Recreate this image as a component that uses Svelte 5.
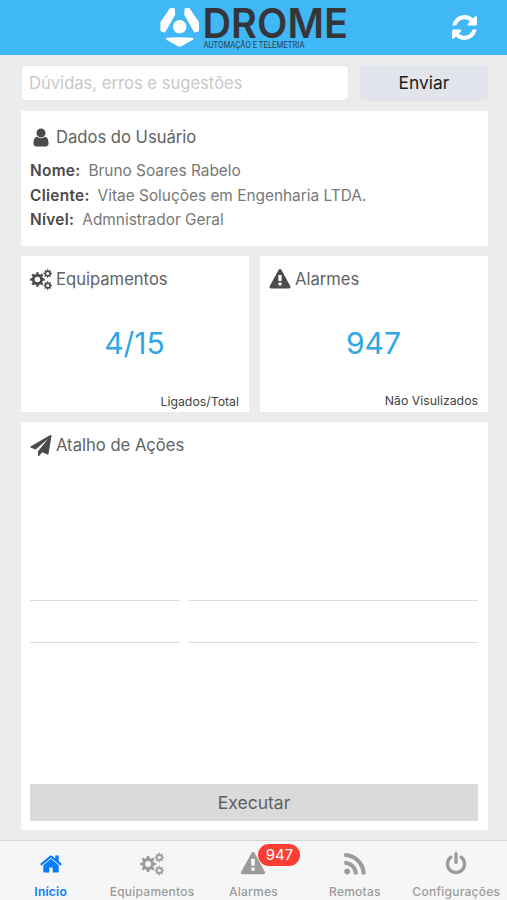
<script lang="ts">
	const icons: Record<string, string> = {
		home: 'M1408 992v480q0 26-19 45t-45 19h-384v-384h-256v384h-384q-26 0-45-19t-19-45v-480q0-1 .5-3t.5-3l575-474 575 474q1 2 1 6zm223-69l-62 74q-8 9-21 11h-3q-13 0-21-7l-692-577-692 577q-12 8-24 7-13-2-21-11l-62-74q-8-10-7-23.5t11-21.5l719-599q32-26 76-26t76 26l244 204v-195q0-14 9-23t23-9h192q14 0 23 9t9 23v408l219 182q10 8 11 21.5t-7 23.5z',
		warning: 'M1024 1375v-190q0-14-9.5-23.5t-22.5-9.5h-192q-13 0-22.5 9.5t-9.5 23.5v190q0 14 9.5 23.5t22.5 9.5h192q13 0 22.5-9.5t9.5-23.5zm-2-374l18-459q0-12-10-19-13-11-24-11h-220q-11 0-24 11-10 7-10 21l17 457q0 10 10 16.5t24 6.5h185q14 0 23.5-6.5t10.5-16.5zm-14-934l768 1408q35 63-2 126-17 29-46.5 46t-63.5 17h-1536q-34 0-63.5-17t-46.5-46q-37-63-2-126l768-1408q17-31 47-49t65-18 65 18 47 49z',
		refresh: 'M1639 1056q0 5-1 7-64 268-268 434.5t-478 166.5q-146 0-282.5-55t-243.5-157l-129 129q-19 19-45 19t-45-19-19-45v-448q0-26 19-45t45-19h448q26 0 45 19t19 45-19 45l-137 137q71 66 161 102t187 36q134 0 250-65t186-179q11-17 53-117 8-23 30-23h192q13 0 22.5 9.5t9.5 22.5zm25-800v448q0 26-19 45t-45 19h-448q-26 0-45-19t-19-45 19-45l138-138q-148-137-349-137-134 0-250 65t-186 179q-11 17-53 117-8 23-30 23h-199q-13 0-22.5-9.5t-9.5-22.5v-7q65-268 270-434.5t480-166.5q146 0 284 55.5t245 156.5l130-129q19-19 45-19t45 19 19 45z',
		rss: 'M576 1344q0 80-56 136t-136 56-136-56-56-136 56-136 136-56 136 56 56 136zm512 123q2 28-17 48-18 21-47 21h-135q-25 0-43-16.5t-20-41.5q-22-229-184.5-391.5t-391.5-184.5q-25-2-41.5-20t-16.5-43v-135q0-29 21-47 17-17 43-17h5q160 13 306 80.5t259 181.5q114 113 181.5 259t80.5 306zm512 2q2 27-18 47-18 20-46 20h-143q-26 0-44.5-17.5t-19.5-42.5q-12-215-101-408.5t-231.5-336-336-231.5-408.5-102q-25-1-42.5-19.5t-17.5-43.5v-143q0-28 20-46 18-18 44-18h3q262 13 501.5 120t425.5 294q187 186 294 425.5t120 501.5z',
		power: 'M1664 896q0 156-61 298t-164 245-245 164-298 61-298-61-245-164-164-245-61-298q0-182 80.5-343t226.5-270q43-32 95.5-25t83.5 50q32 42 24.5 94.5t-49.5 84.5q-98 74-151.5 181t-53.5 228q0 104 40.5 198.5t109.5 163.5 163.5 109.5 198.5 40.5 198.5-40.5 163.5-109.5 109.5-163.5 40.5-198.5q0-121-53.5-228t-151.5-181q-42-32-49.5-84.5t24.5-94.5q31-43 84-50t95 25q146 109 226.5 270t80.5 343zm-640-768v640q0 52-38 90t-90 38-90-38-38-90v-640q0-52 38-90t90-38 90 38 38 90z',
		plane: 'M1764 11q33 24 27 64l-256 1536q-5 29-32 45-14 8-31 8-11 0-24-5l-453-185-242 295q-18 23-49 23-13 0-22-4-19-7-30.5-23.5t-11.5-36.5v-349l864-1059-1069 925-395-162q-37-14-40-55-2-40 32-59l1664-960q15-9 32-9 20 0 36 11z',
		user: 'M1536 1399q0 109-62.5 187t-150.5 78h-854q-88 0-150.5-78t-62.5-187q0-85 8.5-160.5t31.5-152 58.5-131 94-89 134.5-34.5q131 128 313 128t313-128q76 0 134.5 34.5t94 89 58.5 131 31.5 152 8.5 160.5zm-256-887q0 159-112.5 271.5t-271.5 112.5-271.5-112.5-112.5-271.5 112.5-271.5 271.5-112.5 271.5 112.5 112.5 271.5z',
		cogs: gear(640, 896, 640, 480, 240) + gear(1530, 380, 370, 270, 135) + gear(1530, 1412, 370, 270, 135)
	};

	const boxes: Record<string, string> = {
		home: '0 0 1664 1792',
		cogs: '0 0 1900 1792',
		rss: '110 70 1572 1572'
	};

	// Eight-toothed gear with a round hole
	function gear(cx: number, cy: number, outer: number, inner: number, hole: number): string {
		const points: string[] = [];
		for (let i = 0; i < 8; i++) {
			const steps = [[-0.29, inner], [-0.2, outer], [0.2, outer], [0.29, inner]];
			for (const [offset, r] of steps) {
				const a = ((i + offset) * Math.PI) / 4;
				points.push(`${(cx + r * Math.cos(a)).toFixed(0)} ${(cy + r * Math.sin(a)).toFixed(0)}`);
			}
		}
		return `M${points.join('L')}zM${cx - hole} ${cy}a${hole} ${hole} 0 1 0 ${hole * 2} 0a${hole} ${hole} 0 1 0 ${-hole * 2} 0z`;
	}

	const userInfo = [
		{ label: 'Nome:', value: 'Bruno Soares Rabelo' },
		{ label: 'Cliente:', value: 'Vitae Soluções em Engenharia LTDA.' },
		{ label: 'Nível:', value: 'Admnistrador Geral' }
	];

	const tabs = [
		{ label: 'Início', icon: 'home', badge: 0 },
		{ label: 'Equipamentos', icon: 'cogs', badge: 0 },
		{ label: 'Alarmes', icon: 'warning', badge: 947 },
		{ label: 'Remotas', icon: 'rss', badge: 0 },
		{ label: 'Configurações', icon: 'power', badge: 0 }
	];

	let active = $state('Início');
	let message = $state('');
</script>

{#snippet icon(name: string)}
	<svg class="icon icon-{name}" viewBox={boxes[name] ?? '0 0 1792 1792'} aria-hidden="true">
		<path d={icons[name]} fill-rule="evenodd" />
	</svg>
{/snippet}

<div class="app">
	<header>
		<svg class="logo" viewBox="0 0 190 50" role="img" aria-label="DROME">
			<g class="logo-mark">
				<path d="M11.5 9L14.8 9L15.2 14.5L5.5 31.5L2.4 30.5L2.4 22.5z" />
				<path d="M29.9 9L26.6 9L26.2 14.5L35.9 31.5L39 30.5L39 22.5z" />
				<path d="M8 38.8Q20.7 37.5 33.4 38.8L22.8 45Q20.7 46 18.6 45z" />
				<circle cx="20.7" cy="26.8" r="5.8" />
			</g>
			<text class="logo-name" x="43.5" y="38" textLength="145.5" lengthAdjust="spacingAndGlyphs">DROME</text>
			<text class="logo-tagline" x="44.5" y="47.5" textLength="101" lengthAdjust="spacingAndGlyphs">AUTOMAÇÃO E TELEMETRIA</text>
		</svg>
		<button class="refresh" aria-label="Atualizar">{@render icon('refresh')}</button>
	</header>

	<main>
		<form class="feedback" onsubmit={(e) => e.preventDefault()}>
			<input placeholder="Dúvidas, erros e sugestões" bind:value={message} />
			<button class="send">Enviar</button>
		</form>

		<section class="card user">
			<h2>{@render icon('user')}<span>Dados do Usuário</span></h2>
			{#each userInfo as { label, value }}
				<p><b>{label}</b><span>{value}</span></p>
			{/each}
		</section>

		<div class="stats">
			<section class="card stat">
				<h2>{@render icon('cogs')}<span>Equipamentos</span></h2>
				<div class="number">4/15</div>
				<small>Ligados/Total</small>
			</section>
			<section class="card stat alarms">
				<h2>{@render icon('warning')}<span>Alarmes</span></h2>
				<div class="number">947</div>
				<small>Não Visulizados</small>
			</section>
		</div>

		<section class="card shortcuts">
			<h2>{@render icon('plane')}<span>Atalho de Ações</span></h2>
			<div class="pickers">
				<div class="picker"></div>
				<div class="picker"></div>
			</div>
			<button class="run">Executar</button>
		</section>
	</main>

	<nav>
		{#each tabs as tab}
			<button class="tab" class:active={active === tab.label} onclick={() => (active = tab.label)}>
				<span class="tab-icon">
					{@render icon(tab.icon)}
					{#if tab.badge}
						<span class="badge">{tab.badge}</span>
					{/if}
				</span>
				<span class="tab-label">{tab.label}</span>
			</button>
		{/each}
	</nav>
</div>

<style>
	:global(body) {
		margin: 0;
		background: #ececec;
	}

	.app {
		display: flex;
		flex-direction: column;
		height: 100vh;
		min-height: 900px;
		box-sizing: border-box;
		font-family: Inter, 'Liberation Sans', sans-serif;
		color: #505050;
	}

	button {
		border: 0;
		padding: 0;
		font-family: inherit;
		cursor: pointer;
	}

	.icon {
		display: block;
		fill: currentColor;
		flex: none;
	}

	header {
		display: grid;
		grid-template-columns: 1fr 190px 1fr;
		height: 55px;
		background: #40b8f6;
	}

	.logo {
		grid-column: 2;
		width: 190px;
		height: 50px;
		overflow: visible;
	}

	.logo-mark {
		fill: #fff;
		stroke: #fff;
		stroke-width: 2px;
		stroke-linejoin: round;
	}

	.logo-name {
		font-size: 41px;
		font-weight: 600;
		fill: #35363b;
	}

	.logo-tagline {
		font-family: Roboto, sans-serif;
		font-size: 8.5px;
		fill: #2b4254;
	}

	.refresh {
		justify-self: end;
		align-self: center;
		margin-right: 28px;
		background: none;
		color: #fff;
	}

	.icon-refresh {
		width: 29px;
		height: 29px;
	}

	main {
		flex: 1;
		display: flex;
		flex-direction: column;
		gap: 10px;
		padding: 10px 19px 10px 21px;
	}

	.feedback {
		display: flex;
		gap: 11px;
		height: 36px;
	}

	input {
		flex: 1;
		min-width: 0;
		box-sizing: border-box;
		border: 1px solid #e6e6e6;
		border-radius: 5px;
		padding: 0 7px 1px;
		font-family: inherit;
		font-size: 16.6px;
		background: #fff;
	}

	input::placeholder {
		color: #c8c8cb;
		opacity: 1;
	}

	.send {
		width: 128px;
		border-radius: 2px;
		padding-bottom: 1px;
		font-size: 17.4px;
		color: #1b1d20;
		background: #e2e5eb;
	}

	.card {
		box-sizing: border-box;
		padding: 13px 10px 9px 9px;
		background: #fff;
	}

	h2 {
		display: flex;
		align-items: center;
		gap: 4px;
		height: 26px;
		margin: 0;
		font-size: 16.6px;
		font-weight: 400;
		color: #626262;
	}

	h2 .icon {
		width: 22px;
		height: 21px;
		color: #4b4b4b;
	}

	.user {
		height: 135px;
	}

	.user p {
		display: flex;
		gap: 8px;
		margin: 0;
		font-size: 15.4px;
		line-height: 24.5px;
		color: #777;
	}

	.user h2 {
		margin-bottom: 9px;
	}

	.user b {
		font-weight: 600;
		letter-spacing: 0.3px;
		color: #4a4a4a;
	}

	.stats {
		display: grid;
		grid-template-columns: 1fr 1fr;
		gap: 11px;
		height: 156px;
	}

	.stat {
		display: flex;
		flex-direction: column;
		padding: 10px 10px 3px 9px;
	}

	.number {
		flex: 1;
		display: flex;
		align-items: center;
		justify-content: center;
		font-size: 30px;
		color: #2ea7e4;
	}

	.stat small {
		text-align: right;
		font-size: 12.3px;
		line-height: 15px;
		color: #444;
	}

	.alarms {
		padding-bottom: 4px;
	}

	.shortcuts {
		flex: 1;
		display: flex;
		flex-direction: column;
		padding-top: 10px;
	}

	.pickers {
		flex: 1;
		display: grid;
		grid-template-columns: 150px 1fr;
		gap: 9px;
		align-items: center;
	}

	.picker {
		height: 41px;
		border: solid #dcdcdc;
		border-width: 1px 0;
	}

	.run {
		height: 37px;
		font-size: 17.5px;
		color: #606060;
		background: #dadada;
	}

	nav {
		display: grid;
		grid-template-columns: repeat(5, 1fr);
		height: 60px;
		box-sizing: border-box;
		border-top: 1px solid #d4d4d4;
		background: #f6f6f6;
	}

	.tab {
		display: flex;
		flex-direction: column;
		align-items: center;
		padding-top: 11px;
		color: #9b9b9b;
		background: none;
	}

	.tab.active {
		color: #087cfb;
	}

	.tab-icon {
		position: relative;
		height: 24px;
	}

	.tab .icon {
		width: 24px;
		height: 24px;
	}

	.badge {
		position: absolute;
		left: 17px;
		top: -8px;
		width: 42px;
		height: 22px;
		border-radius: 11px;
		font-size: 15px;
		line-height: 22px;
		color: #fff;
		background: #fc3d33;
	}

	.tab-label {
		margin-top: 8px;
		font-size: 12px;
		line-height: 16px;
		font-weight: 500;
		letter-spacing: 0.25px;
	}

	.active .tab-label {
		font-weight: 600;
	}
</style>
